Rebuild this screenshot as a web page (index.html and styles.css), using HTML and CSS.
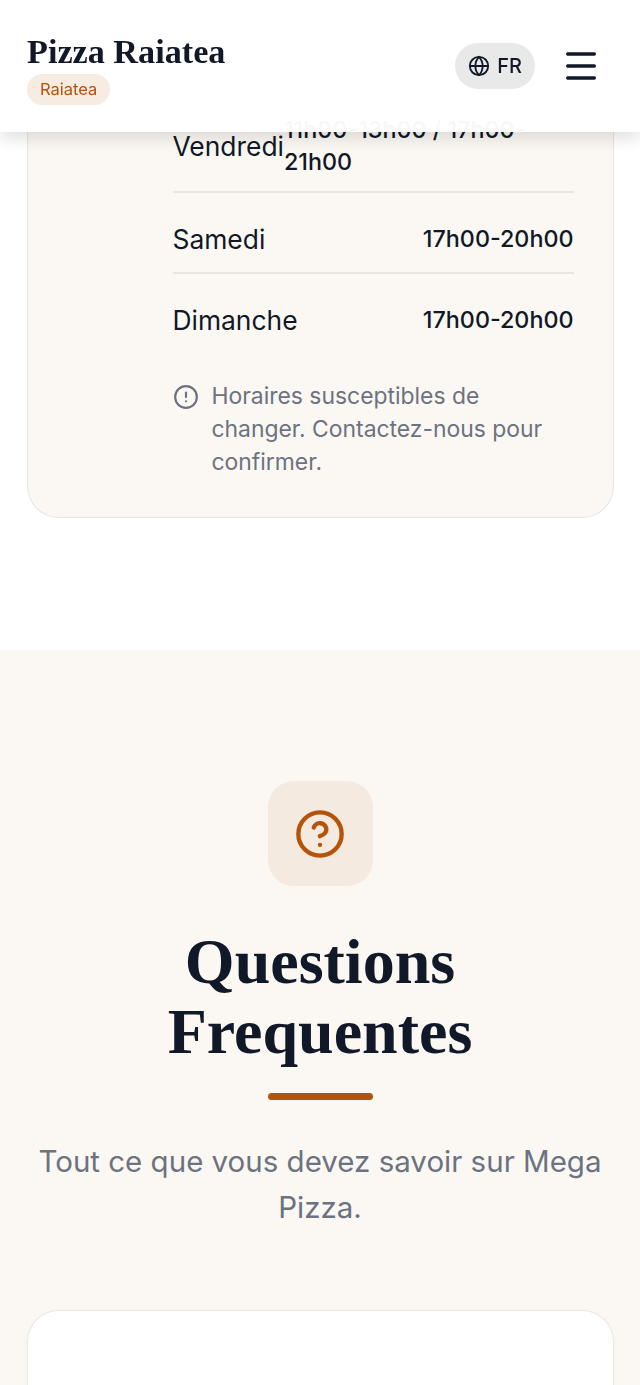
FILE: index.html
```html
<!DOCTYPE html>
<html lang="fr">
  <head>
    <meta charset="UTF-8" />
    <meta name="viewport" content="width=device-width, initial-scale=1.0" />
    <title>Pizza Raiatea</title>
    <link rel="stylesheet" href="styles.css">
  </head>
  <body>
    <header class="site-header">
      <div class="brand">
        <span class="brand-name">Pizza Raiatea</span>
        <span class="brand-tag">Raiatea</span>
      </div>
      <div class="header-actions">
        <button class="lang-btn" type="button">
          <svg class="globe" viewBox="0 0 24 24" fill="none" stroke="currentColor" stroke-width="2" stroke-linecap="round" stroke-linejoin="round">
            <circle cx="12" cy="12" r="10"></circle>
            <path d="M12 2a14.5 14.5 0 0 0 0 20 14.5 14.5 0 0 0 0-20"></path>
            <path d="M2 12h20"></path>
          </svg>
          FR
        </button>
        <button class="menu-btn" type="button" aria-label="Menu">
          <svg viewBox="0 0 30 30" fill="none" stroke="currentColor" stroke-width="3.4" stroke-linecap="round">
            <path d="M1.7 3h26.6"></path>
            <path d="M1.7 15h26.6"></path>
            <path d="M1.7 27h26.6"></path>
          </svg>
        </button>
      </div>
    </header>

    <main>
      <section class="hours-section">
        <div class="hours-card">
          <div class="hours-list">
            <div class="hours-row">
              <span class="day">Vendredi</span>
              <span class="time">11h00-13h00 / 17h00-21h00</span>
            </div>
            <div class="hours-row">
              <span class="day">Samedi</span>
              <span class="time">17h00-20h00</span>
            </div>
            <div class="hours-row">
              <span class="day">Dimanche</span>
              <span class="time">17h00-20h00</span>
            </div>
            <div class="hours-note">
              <svg viewBox="0 0 24 24" fill="none" stroke="currentColor" stroke-width="2" stroke-linecap="round" stroke-linejoin="round">
                <circle cx="12" cy="12" r="10"></circle>
                <path d="M12 8v4"></path>
                <path d="M12 16h.01"></path>
              </svg>
              <p>Horaires susceptibles de changer. Contactez-nous pour confirmer.</p>
            </div>
          </div>
        </div>
      </section>

      <section class="faq-section">
        <div class="faq-icon">
          <svg viewBox="0 0 24 24" fill="none" stroke="currentColor" stroke-width="2" stroke-linecap="round" stroke-linejoin="round">
            <circle cx="12" cy="12" r="10"></circle>
            <path d="M9.09 9a3 3 0 0 1 5.83 1c0 2-3 3-3 3"></path>
            <path d="M12 17h.01"></path>
          </svg>
        </div>
        <h2>Questions Frequentes</h2>
        <div class="faq-rule"></div>
        <p class="faq-intro">Tout ce que vous devez savoir sur Mega Pizza.</p>
        <div class="faq-card"></div>
      </section>
    </main>
  </body>
</html>
```

FILE: styles.css
```css
* {
  box-sizing: border-box;
}

html,
body {
  height: 1385px;
  overflow: hidden;
}

body {
  margin: 0;
  font-family: Inter, sans-serif;
  background-color: #fff;
  color: #111827;
}

.site-header {
  position: fixed;
  top: 0;
  left: 0;
  right: 0;
  z-index: 10;
  height: 132px;
  padding: 0 44px 0 27px;
  display: flex;
  align-items: center;
  justify-content: space-between;
  background-color: rgba(255, 255, 255, 0.97);
  box-shadow: 0 6px 16px rgba(0, 0, 0, 0.13);
}

.brand {
  display: flex;
  flex-direction: column;
  align-items: flex-start;
  gap: 2px;
  margin-top: 5px;
}

.brand-name {
  font-family: "Liberation Serif", serif;
  font-weight: 700;
  font-size: 34.2px;
  line-height: 40px;
  color: #111827;
}

.brand-tag {
  padding: 0 13px;
  height: 31px;
  line-height: 31px;
  border-radius: 16px;
  font-size: 16.5px;
  color: #b45309;
  background-color: #f6ece2;
}

.header-actions {
  display: flex;
  align-items: center;
  gap: 31px;
}

.lang-btn {
  display: flex;
  align-items: center;
  gap: 7px;
  height: 46px;
  padding: 0 13px;
  border: none;
  border-radius: 23px;
  background-color: #e9e9e9;
  color: #111827;
  font-family: Inter, sans-serif;
  font-size: 20px;
  font-weight: 500;
}

.globe {
  width: 22px;
  height: 22px;
}

.menu-btn {
  display: block;
  flex: none;
  width: 30px;
  height: 30px;
  padding: 0;
  border: none;
  background: none;
  color: #111827;
}

.menu-btn svg {
  display: block;
}

.hours-section {
  height: 650px;
  padding: 0 26.5px;
}

.hours-card {
  height: 518px;
  padding: 114px 39px 0 145px;
  background-color: #fbf8f3;
  border: 1.5px solid #e5e5e3;
  border-top: none;
  border-radius: 0 0 32px 32px;
}

.hours-row {
  display: flex;
  align-items: center;
  justify-content: space-between;
  font-size: 26.4px;
  line-height: 32px;
  padding: 30px 0 17px;
  border-bottom: 2px solid #e8e6e2;
}

.hours-row:first-child {
  padding-top: 0;
  padding-bottom: 13px;
}

.hours-row:nth-child(3) {
  padding-bottom: 18px;
  border-bottom: none;
}

.time {
  font-size: 23.3px;
  font-weight: 500;
  text-align: right;
}

.hours-row:first-child .time {
  text-align: left;
}

.hours-note {
  display: flex;
  gap: 13px;
  margin-top: 26px;
  color: #6b7280;
}

.hours-note svg {
  flex: none;
  width: 26px;
  height: 26px;
  margin-top: 4px;
}

.hours-note p {
  margin: 0;
  font-size: 22.9px;
  line-height: 33px;
}

.faq-section {
  height: 735px;
  padding: 131px 26.5px 0;
  background-color: #fbf8f3;
  display: flex;
  flex-direction: column;
  align-items: center;
}

.faq-section > * {
  flex: none;
}

.faq-icon {
  width: 105px;
  height: 105px;
  display: flex;
  align-items: center;
  justify-content: center;
  border-radius: 26px;
  background-color: #f5eadf;
  color: #b45309;
}

.faq-icon svg {
  width: 52px;
  height: 52px;
}

.faq-section h2 {
  margin: 41px 0 0;
  width: 340px;
  text-align: center;
  font-family: "Liberation Serif", serif;
  font-weight: 700;
  font-size: 64px;
  line-height: 70px;
  color: #111827;
}

.faq-rule {
  width: 105px;
  height: 7px;
  margin-top: 26px;
  border-radius: 4px;
  background-color: #b45309;
}

.faq-intro {
  margin: 38px 0 0;
  width: 586px;
  text-align: center;
  font-size: 29.5px;
  line-height: 46px;
  color: #6b7280;
}

.faq-card {
  align-self: stretch;
  height: 120px;
  margin-top: 80px;
  background-color: #fff;
  border: 1.5px solid #e9e7e3;
  border-bottom: none;
  border-radius: 32px 32px 0 0;
  box-shadow: 0 1px 4px rgba(0, 0, 0, 0.04);
}
```
